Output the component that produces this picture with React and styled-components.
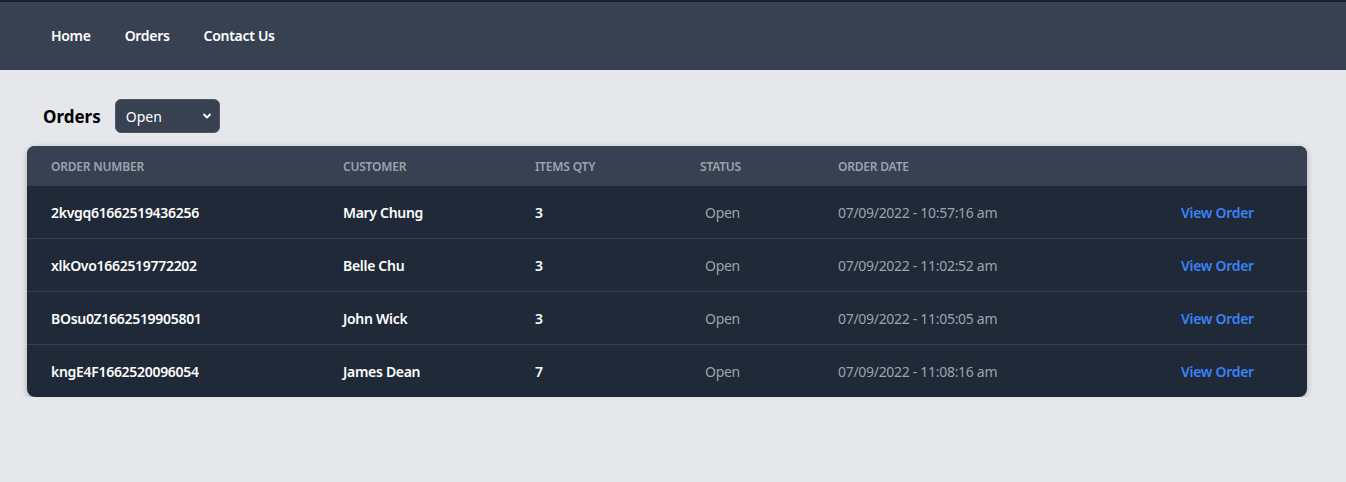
import React, { useState } from 'react';
import styled, { createGlobalStyle } from 'styled-components';

const GlobalStyle = createGlobalStyle`
  body {
    margin: 0;
    background-color: #e5e7eb;
    font-family: "Noto Sans", "Open Sans", "Liberation Sans", sans-serif;
  }
`;

const orders = [
  { id: '2kvgq61662519436256', customer: 'Mary Chung', qty: 3, status: 'Open', date: '07/09/2022 - 10:57:16 am' },
  { id: 'xlkOvo1662519772202', customer: 'Belle Chu', qty: 3, status: 'Open', date: '07/09/2022 - 11:02:52 am' },
  { id: 'BOsu0Z1662519905801', customer: 'John Wick', qty: 3, status: 'Open', date: '07/09/2022 - 11:05:05 am' },
  { id: 'kngE4F1662520096054', customer: 'James Dean', qty: 7, status: 'Open', date: '07/09/2022 - 11:08:16 am' },
];

// column widths in px
const columns = [
  { label: 'Order Number', width: 292 },
  { label: 'Customer', width: 192 },
  { label: 'Items Qty', width: 165 },
  { label: 'Status', width: 138 },
  { label: 'Order Date', width: 343 },
  { label: '', width: 150 },
];

const NavBar = styled.nav`
  box-sizing: border-box;
  height: 70px;
  padding-bottom: 2px;
  background-color: #374151;
  border-top: 2px solid #1a202c;
  display: flex;
  align-items: center;
  padding-left: 51px;
  gap: 34px;
`;

const NavLink = styled.a`
  color: #ffffff;
  font-size: 14px;
  font-weight: 600;
  letter-spacing: -0.3px;
  text-decoration: none;
  cursor: pointer;
`;

const Main = styled.main`
  padding: 29px 39px 0 27px;
`;

const TitleRow = styled.div`
  display: flex;
  align-items: center;
  gap: 14px;
  padding-left: 16px;
  margin-bottom: 13px;
`;

const Title = styled.h1`
  margin: 0;
  font-size: 17px;
  font-weight: 700;
  color: #000000;
`;

const Select = styled.select`
  width: 105px;
  height: 34px;
  padding: 0 8px 0 10px;
  border-radius: 6px;
  border: 1px solid #4b5563;
  background-color: #374151;
  color: #ffffff;
  font-family: inherit;
  font-size: 14px;
  outline: none;
  appearance: none;
  background-image: url("data:image/svg+xml,%3Csvg xmlns='http://www.w3.org/2000/svg' viewBox='0 0 12 12'%3E%3Cpath d='M3 4.5l3 3 3-3' fill='none' stroke='white' stroke-width='1.8' stroke-linecap='round' stroke-linejoin='round'/%3E%3C/svg%3E");
  background-repeat: no-repeat;
  background-position: right 6px center;
  background-size: 12px 12px;
`;

const TableWrap = styled.div`
  width: 1280px;
  border-radius: 8px;
  overflow: hidden;
  box-shadow: 0 2px 6px rgba(0, 0, 0, 0.25);
`;

const Table = styled.table`
  width: 100%;
  border-collapse: collapse;
  table-layout: fixed;
  background-color: #1f2937;
`;

const HeaderCell = styled.th`
  height: 40px;
  padding: 0 0 0 24px;
  background-color: #374151;
  color: #9ca3af;
  font-size: 12px;
  font-weight: 600;
  letter-spacing: -0.2px;
  text-transform: uppercase;
  text-align: left;
`;

const Row = styled.tr`
  border-top: 1px solid #374151;

  &:first-child {
    border-top: none;
  }
`;

const Cell = styled.td`
  height: 52px;
  padding: 0 0 0 ${({ $indent }) => ($indent ? 29 : 24)}px;
  color: ${({ $muted }) => ($muted ? '#9ca3af' : '#ffffff')};
  font-size: 14px;
  font-weight: ${({ $muted }) => ($muted ? 400 : 600)};
  letter-spacing: -0.3px;
  white-space: nowrap;
`;

const ViewLink = styled.a`
  color: #3b82f6;
  font-size: 14px;
  font-weight: 600;
  text-decoration: none;
  cursor: pointer;
`;

export default function App() {
  const [status, setStatus] = useState('Open');

  return (
    <>
      <GlobalStyle />
      <NavBar>
        <NavLink>Home</NavLink>
        <NavLink>Orders</NavLink>
        <NavLink>Contact Us</NavLink>
      </NavBar>
      <Main>
        <TitleRow>
          <Title>Orders</Title>
          <Select value={status} onChange={(e) => setStatus(e.target.value)}>
            <option>Open</option>
            <option>Closed</option>
            <option>All</option>
          </Select>
        </TitleRow>
        <TableWrap>
          <Table>
            <colgroup>
              {columns.map((col, i) => (
                <col key={i} style={{ width: col.width }} />
              ))}
            </colgroup>
            <thead>
              <tr>
                {columns.map((col, i) => (
                  <HeaderCell key={i}>{col.label}</HeaderCell>
                ))}
              </tr>
            </thead>
            <tbody>
              {orders.map((order) => (
                <Row key={order.id}>
                  <Cell>{order.id}</Cell>
                  <Cell>{order.customer}</Cell>
                  <Cell>{order.qty}</Cell>
                  <Cell $muted $indent>{order.status}</Cell>
                  <Cell $muted>{order.date}</Cell>
                  <Cell>
                    <ViewLink>View Order</ViewLink>
                  </Cell>
                </Row>
              ))}
            </tbody>
          </Table>
        </TableWrap>
      </Main>
    </>
  );
}
